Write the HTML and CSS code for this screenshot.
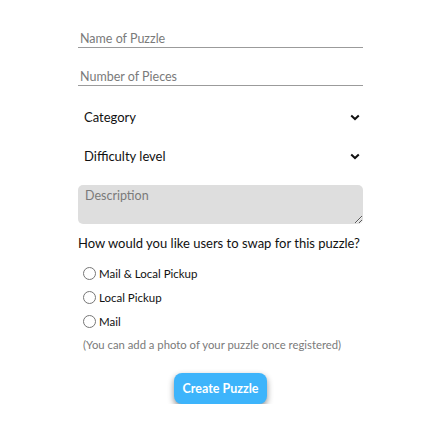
FILE: index.html
```html
<!DOCTYPE html>
<html lang="en">
<head>
<meta charset="utf-8">
<title>Create Puzzle</title>
<link rel="stylesheet" href="styles.css">
</head>
<body>
<form class="puzzle-form">
  <input class="text-field" type="text" placeholder="Name of Puzzle">
  <input class="text-field" type="text" placeholder="Number of Pieces">
  <div class="select-wrap">
    <select class="select-field"><option>Category</option></select>
    <svg class="chevron" width="10" height="7" viewBox="0 0 10 7"><path d="M1.2 1.5l3.8 3.6 3.8-3.6" fill="none" stroke="#111" stroke-width="2"/></svg>
  </div>
  <div class="select-wrap">
    <select class="select-field"><option>Difficulty level</option></select>
    <svg class="chevron" width="10" height="7" viewBox="0 0 10 7"><path d="M1.2 1.5l3.8 3.6 3.8-3.6" fill="none" stroke="#111" stroke-width="2"/></svg>
  </div>
  <textarea class="desc-field" placeholder="Description"></textarea>
  <p class="question">How would you like users to swap for this puzzle?</p>
  <div class="radios">
    <label class="radio-row"><input type="radio" name="swap"><span>Mail &amp; Local Pickup</span></label>
    <label class="radio-row"><input type="radio" name="swap"><span>Local Pickup</span></label>
    <label class="radio-row"><input type="radio" name="swap"><span>Mail</span></label>
  </div>
  <p class="note">(You can add a photo of your puzzle once registered)</p>
  <div class="actions">
    <button type="button" class="create-btn">Create Puzzle</button>
  </div>
</form>
</body>
</html>
```
FILE: styles.css
```css
* { box-sizing: border-box; }
body {
  margin: 0;
  background: #fff;
  font-family: "Lato", "Open Sans", sans-serif;
  color: #111;
}
.puzzle-form {
  width: 285px;
  margin-left: 78px;
  padding-top: 30px;
  display: flex;
  flex-direction: column;
}
.text-field {
  display: block;
  width: 100%;
  height: 18px;
  border: none;
  border-bottom: 1px solid #9b9b9b;
  padding: 0 2px;
  font: 12.5px "Lato", sans-serif;
  color: #333;
  outline: none;
  margin-bottom: 20px;
}
.text-field::placeholder { color: #7a7a7a; }
.select-wrap {
  display: grid;
  align-items: center;
  height: 22px;
  margin-bottom: 17px;
}
.select-field, .chevron { grid-area: 1 / 1; }
.select-field {
  appearance: none;
  -webkit-appearance: none;
  border: none;
  background: transparent;
  font: 13px "Lato", sans-serif;
  color: #111;
  padding: 0 6px;
  height: 22px;
  width: 100%;
}
.chevron { justify-self: end; margin-right: 3px; }
.desc-field {
  display: block;
  width: 100%;
  height: 39px;
  margin-top: 1px;
  border: none;
  border-radius: 5px;
  background: #dedede;
  padding: 3px 7px;
  font: 12.5px "Lato", sans-serif;
  color: #333;
  outline: none;
}
.desc-field::placeholder { color: #7a7a7a; }
.question {
  margin: 11px 0 0;
  font-size: 13px;
  line-height: 16px;
}
.radios {
  display: flex;
  flex-direction: column;
  gap: 8px;
  margin-top: 14px;
  padding-left: 5px;
}
.radio-row {
  display: flex;
  align-items: center;
  gap: 3px;
  height: 16px;
  font-size: 11.5px;
}
.radio-row input { margin: 0; width: 13px; height: 13px; }
.note {
  margin: 8px 0 0 5px;
  font-size: 11.3px;
  line-height: 16px;
  color: #7a7a7a;
}
.actions {
  display: flex;
  justify-content: center;
  margin-top: 20px;
}
.create-btn {
  width: 93px;
  height: 31px;
  border: none;
  border-radius: 8px;
  background: #3db4fb;
  color: #fff;
  font: bold 12.5px "Lato", sans-serif;
  box-shadow: 0 3px 6px rgba(0,0,0,0.45);
}
```
